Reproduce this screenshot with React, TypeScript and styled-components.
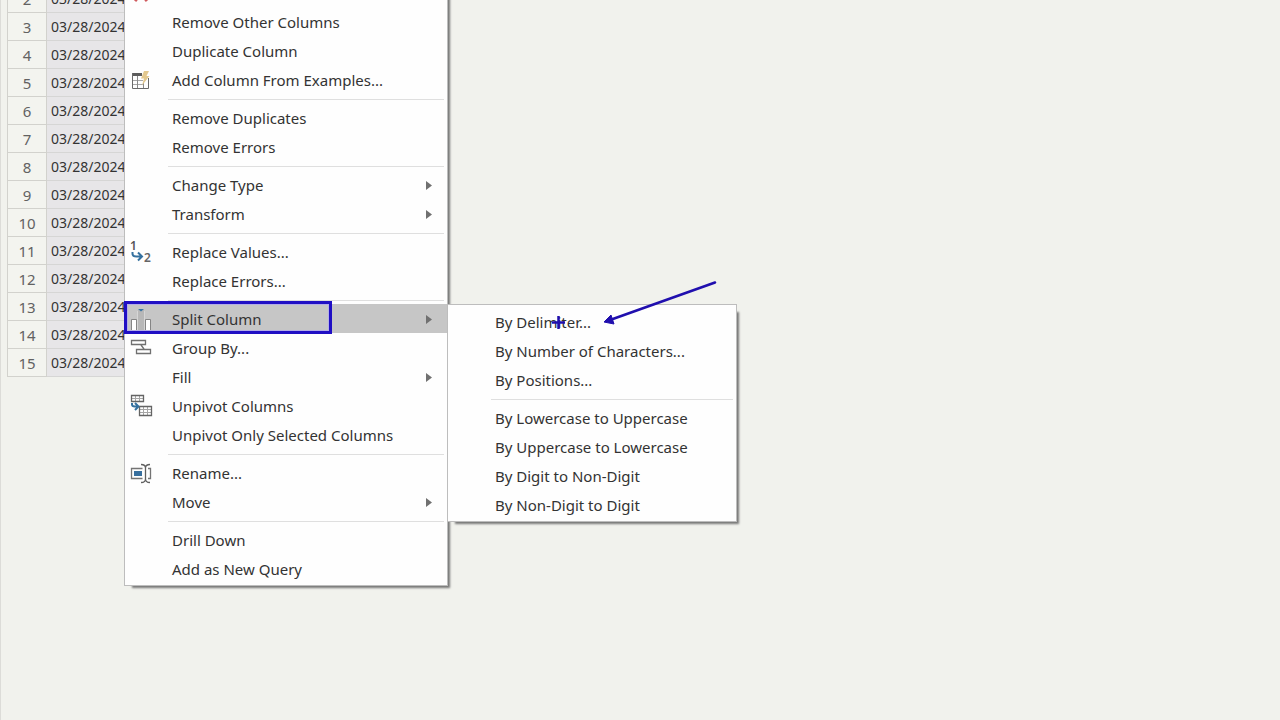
import React from "react";
import styled, { createGlobalStyle, css } from "styled-components";

const GlobalStyle = createGlobalStyle`
  * { box-sizing: border-box; }
  body {
    margin: 0;
    background: #f1f2ed;
    color: #333333;
    font-family: "Noto Sans", "Open Sans", sans-serif;
  }
`;

const Workspace = styled.main`
  position: relative;
  height: 100vh;
  overflow: hidden;
  border-left: 1px solid #dcdcd8;
  padding-left: 6px;
`;

const DataGrid = styled.table`
  margin-top: -16px;
  border-collapse: collapse;
  font-size: 14px;
`;

const RowNumber = styled.th`
  width: 39px;
  height: 28px;
  padding: 0;
  border: 1px solid #d2d2cd;
  background: #f3f4ef;
  color: #626262;
  font-size: 15px;
  font-weight: 400;
  line-height: 20px;
`;

const DateCell = styled.td`
  width: 120px;
  padding: 0 4px;
  border: 1px solid #d6d6d5;
  background: #e7e6e8;
  line-height: 20px;
`;

const menuPanel = css`
  position: absolute;
  margin: 0;
  padding: 2px 0;
  list-style: none;
  background: #fefefe;
  border: 1px solid #bdbdbd;
  box-shadow: 5px 5px 2px -3px #777777;
`;

const ContextMenu = styled.ul`
  ${menuPanel}
  top: -25px;
  left: 123px;
  width: 324px;
`;

const SubMenu = styled.ul`
  ${menuPanel}
  top: 0;
  left: 322px;
  width: 290px;
`;

const Entry = styled.li`
  position: relative;
`;

const Command = styled.button<{ $active?: boolean }>`
  display: grid;
  grid-template-columns: 42px 1fr 21px;
  align-items: center;
  width: 100%;
  height: 29px;
  padding: 0 0 0 5px;
  border: 0;
  background: ${(p) => (p.$active ? "#c6c6c6" : "transparent")};
  color: inherit;
  font: inherit;
  font-size: 15px;
  line-height: 20px;
  text-align: left;
  white-space: nowrap;
`;

const IconSlot = styled.span`
  display: flex;
  height: 24px;
`;

const Divider = styled.li`
  height: 9px;
  margin: 0 3px 0 43px;
  border-bottom: 3px solid transparent;
  background: linear-gradient(#dfdfdf, #dfdfdf) bottom / 100% 1px no-repeat padding-box;
`;

const Highlight = styled.span`
  position: absolute;
  top: -3px;
  left: -1px;
  width: 208px;
  height: 33px;
  border: 3px solid #200fc4;
  box-shadow: inset 0 0 0 1px #b4aee6;
  pointer-events: none;
`;

const Annotation = styled.li`
  position: absolute;
  top: -28px;
  left: 101px;
  pointer-events: none;
`;

const Icon = ({ children }: { children: React.ReactNode }) => (
  <svg width="24" height="24" viewBox="0 0 24 24" fill="none" aria-hidden="true">
    {children}
  </svg>
);

const icons: Record<string, React.ReactNode> = {
  remove: (
    <Icon>
      <path d="M5 6 L17 20 M17 6 L5 20" stroke="#cf5a5e" strokeWidth="3" />
    </Icon>
  ),
  examples: (
    <Icon>
      <path d="M2 5h10v3H2z" fill="#5c5c5c" />
      <path d="M2.500 5v15.500h16V10" stroke="#6a6a6a" />
      <path d="M3 12.500h10M3 16.500h10" stroke="#a8a8a8" />
      <path d="M7.500 8v12M13.500 15v5" stroke="#8a8a8a" />
      <path d="M14 3h5l-2.500 5h3L12 17.500l2-7h-3z" fill="#e3c88e" />
    </Icon>
  ),
  replace: (
    <Icon>
      <text x="0" y="10" fontSize="12" fontWeight="600" fill="#555">1</text>
      <text x="14" y="22" fontSize="12" fontWeight="600" fill="#666">2</text>
      <path d="M2.500 12v1.500q0 3 4 3h5M8 12.500l4 4-4 4" stroke="#35719f" strokeWidth="2" />
    </Icon>
  ),
  split: (
    <Icon>
      <path d="M2 13h4v10H2zM16 13h4v10h-4z" fill="#fff" />
      <path d="M1.500 23V12.500h5V23M15.500 23V12.500h5V23" stroke="#858585" />
      <path d="M8 3h6v20H8z" fill="#b8b8b8" />
      <path d="M7.500 23V4M14.500 23V4" stroke="#d6d6d6" />
      <path d="M8 2h6l-3 2.500z" fill="#3976a5" />
    </Icon>
  ),
  group: (
    <Icon>
      <path d="M1.500 4.500h14v4h-14zM6.500 13.500h14v4h-14zM11 9l3 4" stroke="#707070" strokeWidth="1.300" />
    </Icon>
  ),
  unpivot: (
    <Icon>
      <path d="M1.500 4.500h12M5.500 2v5M9.500 2v5M9.500 15.500h12M9.500 18.500h12M13.500 13v8M17.500 13v8" stroke="#a6a6a6" />
      <path d="M1.500 1.500h12v6h-12zM9.500 12.500h12v9h-12z" stroke="#646464" strokeWidth="1.300" />
      <path d="M2 9v1.500q0 2 3 2h2.500M5 9l3.500 3.500L5 16" stroke="#35719f" strokeWidth="2" />
    </Icon>
  ),
  rename: (
    <Icon>
      <path d="M12.500 7.500h-11v10h11M18 7.500h2.500v10H18" stroke="#747474" strokeWidth="1.300" />
      <path d="M4 10h8v5H4z" fill="#376f9e" />
      <path d="M11 3.500q4.500 0 4.500 3.500v11q0 3.500-4.500 3.500M20 3.500q-4.500 0-4.500 3.500v11q0 3.500 4.500 3.500" stroke="#606060" strokeWidth="1.300" />
    </Icon>
  ),
};

const Caret = () => (
  <svg width="7" height="12" viewBox="0 0 7 12" aria-hidden="true">
    <path d="M0 2 6 6.500 0 11z" fill="#707070" />
  </svg>
);

const PointerArrow = () => (
  <svg width="180" height="60" viewBox="0 0 180 60" fill="none" aria-hidden="true">
    <path d="M166 5.500 61 43" stroke="#200fae" strokeWidth="2.600" strokeLinecap="round" />
    <path d="M55 45 62 38 65 47z" fill="#200fae" stroke="#200fae" strokeLinejoin="round" />
    <path d="M3 45.500h13M9.500 39v13" stroke="#200fae" strokeWidth="2.500" />
  </svg>
);

type Item = { label: string; icon?: string; iconOnly?: boolean; more?: boolean; open?: boolean };

const menuGroups: Item[][] = [
  [
    { label: "Remove", icon: "remove", iconOnly: true },
    { label: "Remove Other Columns" },
    { label: "Duplicate Column" },
    { label: "Add Column From Examples...", icon: "examples" },
  ],
  [{ label: "Remove Duplicates" }, { label: "Remove Errors" }],
  [{ label: "Change Type", more: true }, { label: "Transform", more: true }],
  [{ label: "Replace Values...", icon: "replace" }, { label: "Replace Errors..." }],
  [
    { label: "Split Column", icon: "split", more: true, open: true },
    { label: "Group By...", icon: "group" },
    { label: "Fill", more: true },
    { label: "Unpivot Columns", icon: "unpivot" },
    { label: "Unpivot Only Selected Columns" },
  ],
  [{ label: "Rename...", icon: "rename" }, { label: "Move", more: true }],
  [{ label: "Drill Down" }, { label: "Add as New Query" }],
];

const splitGroups: Item[][] = [
  [{ label: "By Delimiter..." }, { label: "By Number of Characters..." }, { label: "By Positions..." }],
  [
    { label: "By Lowercase to Uppercase" },
    { label: "By Uppercase to Lowercase" },
    { label: "By Digit to Non-Digit" },
    { label: "By Non-Digit to Digit" },
  ],
];

const MenuGroups = ({ groups }: { groups: Item[][] }) => (
  <>
    {groups.map((group, index) => (
      <React.Fragment key={index}>
        {index > 0 && <Divider role="separator" />}
        {group.map((item) => (
          <Entry key={item.label} role="none">
            <Command
              type="button"
              role="menuitem"
              aria-label={item.iconOnly ? item.label : undefined}
              aria-haspopup={item.more ? "menu" : undefined}
              $active={item.open}
            >
              <IconSlot>{item.icon && icons[item.icon]}</IconSlot>
              {!item.iconOnly && <span>{item.label}</span>}
              {item.more && <Caret />}
            </Command>
            {item.open && (
              <>
                <Highlight />
                <SubMenu role="menu" aria-label={item.label}>
                  <MenuGroups groups={splitGroups} />
                  <Annotation role="none">
                    <PointerArrow />
                  </Annotation>
                </SubMenu>
              </>
            )}
          </Entry>
        ))}
      </React.Fragment>
    ))}
  </>
);

const rowNumbers = Array.from({ length: 14 }, (_, i) => i + 2);

export default function App() {
  return (
    <>
      <GlobalStyle />
      <Workspace>
        <DataGrid>
          <tbody>
            {rowNumbers.map((n) => (
              <tr key={n}>
                <RowNumber scope="row">{n}</RowNumber>
                <DateCell>03/28/2024</DateCell>
              </tr>
            ))}
          </tbody>
        </DataGrid>
        <ContextMenu role="menu" aria-label="Column">
          <MenuGroups groups={menuGroups} />
        </ContextMenu>
      </Workspace>
    </>
  );
}
